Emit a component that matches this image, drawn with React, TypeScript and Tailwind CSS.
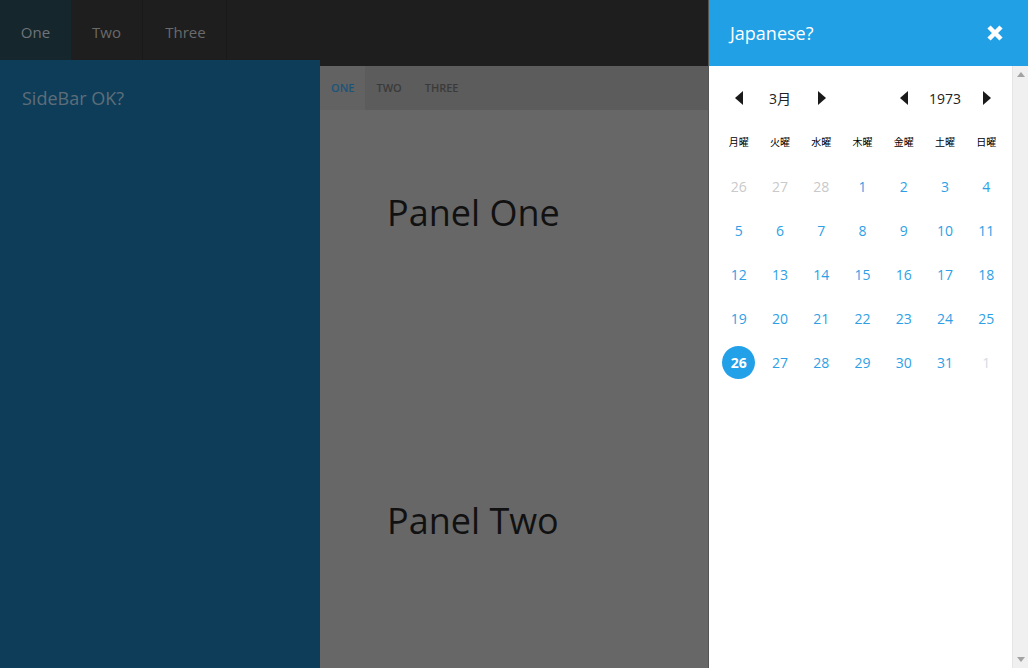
import React from "react";

const font = { fontFamily: '"Open Sans", "Noto Sans CJK JP", sans-serif' };

const weekdays = ["月曜", "火曜", "水曜", "木曜", "金曜", "土曜", "日曜"];

type Day = { n: number; kind: "prev" | "cur" | "next" | "sel" };

const days: Day[] = [
  { n: 26, kind: "prev" },
  { n: 27, kind: "prev" },
  { n: 28, kind: "prev" },
  ...Array.from({ length: 31 }, (_, i) => ({
    n: i + 1,
    kind: (i + 1 === 26 ? "sel" : "cur") as Day["kind"],
  })),
  { n: 1, kind: "next" },
];

function Tri({ dir }: { dir: "left" | "right" }) {
  return (
    <svg width="10" height="16" viewBox="0 0 10 16">
      {dir === "left" ? (
        <path d="M9 1 L1 8 L9 15 Z" fill="#1a1a1a" />
      ) : (
        <path d="M1 1 L9 8 L1 15 Z" fill="#1a1a1a" />
      )}
    </svg>
  );
}

function Calendar() {
  return (
    <div className="ml-[9px] w-[289px]">
      <div className="grid grid-cols-7 h-[62px] items-center pt-[2px]">
        <div className="flex justify-center">
          <Tri dir="left" />
        </div>
        <div className="text-center text-[14px] text-[#222]">3月</div>
        <div className="flex justify-center pl-[2px]">
          <Tri dir="right" />
        </div>
        <div />
        <div className="flex justify-center">
          <Tri dir="left" />
        </div>
        <div className="text-center text-[14px] text-[#222]">1973</div>
        <div className="flex justify-center pl-[2px]">
          <Tri dir="right" />
        </div>
      </div>
      <div className="grid grid-cols-7 h-[28px] items-center">
        {weekdays.map((w) => (
          <div key={w} className="text-center text-[10px] text-black">
            {w}
          </div>
        ))}
      </div>
      <div className="grid grid-cols-7 pt-[8px]">
        {days.map((d, i) => (
          <div key={i} className="h-[44px] flex items-center justify-center">
            {d.kind === "sel" ? (
              <span className="w-[33px] h-[33px] rounded-full bg-[#22a0e8] text-white font-bold text-[14px] flex items-center justify-center">
                {d.n}
              </span>
            ) : (
              <span
                className={`text-[14px] ${
                  d.kind === "prev"
                    ? "text-[#c9c9c9]"
                    : d.kind === "next"
                    ? "text-[#d3dde4]"
                    : "text-[#2e9fe6]"
                }`}
              >
                {d.n}
              </span>
            )}
          </div>
        ))}
      </div>
    </div>
  );
}

export default function App() {
  return (
    <div className="flex w-[1028px] h-[668px] overflow-hidden" style={font}>
      {/* dimmed app behind drawer */}
      <div className="flex flex-col w-[708px] h-full">
        <div className="flex h-[66px] bg-[#1e1e1e] shrink-0 text-[15px]">
          <div className="w-[71px] flex items-center justify-center bg-[#16262d] border-b-[6px] border-[#0e3d59] text-[#6e7478] pt-[4px]">
            One
          </div>
          <div className="w-[72px] flex items-center justify-center text-[#6a6a6a] border-r border-[#191919] pb-[2px]">
            Two
          </div>
          <div className="w-[84px] flex items-center justify-center text-[#6a6a6a] border-r border-[#191919] pb-[2px] pl-[2px]">
            Three
          </div>
        </div>
        <div className="flex flex-1">
          <div className="w-[320px] bg-[#0e3d59] px-[22px] pt-[22px] -mt-[6px] relative">
            <div className="text-[18px] text-[#5d6e79] leading-[32px]">SideBar OK?</div>
          </div>
          <div className="flex-1 bg-[#676767] flex flex-col">
            <div className="flex h-[44px] bg-[#5c5c5c] text-[11px] font-semibold">
              <div className="px-[11px] flex items-center bg-[#626262] text-[#1b5478]">ONE</div>
              <div className="px-[11px] flex items-center text-[#3a3a3a]">TWO</div>
              <div className="px-[12px] flex items-center text-[#3a3a3a]">THREE</div>
            </div>
            <div className="pl-[67px] pt-[79px] text-[36px] text-[#111] leading-[48px]">
              Panel One
            </div>
            <div className="pl-[67px] pt-[260px] text-[36px] text-[#111] leading-[48px]">
              Panel Two
            </div>
          </div>
        </div>
      </div>

      {/* drawer */}
      <div className="w-[320px] h-full flex flex-col bg-white border-l border-[#555]">
        <div className="h-[66px] bg-[#21a0e6] flex items-center justify-between pl-[21px] pr-[24px] shrink-0">
          <span className="text-[18px] text-white">Japanese?</span>
          <svg width="18" height="18" viewBox="0 0 18 18">
            <path d="M3 3 L15 15 M15 3 L3 15" stroke="white" strokeWidth="4.5" strokeLinecap="butt" />
          </svg>
        </div>
        <div className="flex flex-1">
          <div className="flex-1">
            <Calendar />
          </div>
          <div className="w-[16px] bg-[#f0f0f0] border-l border-[#e6e6e6] flex flex-col justify-between items-center py-[6px]">
            <svg width="8" height="5" viewBox="0 0 8 5">
              <path d="M4 0 L8 5 L0 5 Z" fill="#a3a3a3" />
            </svg>
            <svg width="8" height="5" viewBox="0 0 8 5">
              <path d="M0 0 L8 0 L4 5 Z" fill="#a3a3a3" />
            </svg>
          </div>
        </div>
      </div>
    </div>
  );
}
